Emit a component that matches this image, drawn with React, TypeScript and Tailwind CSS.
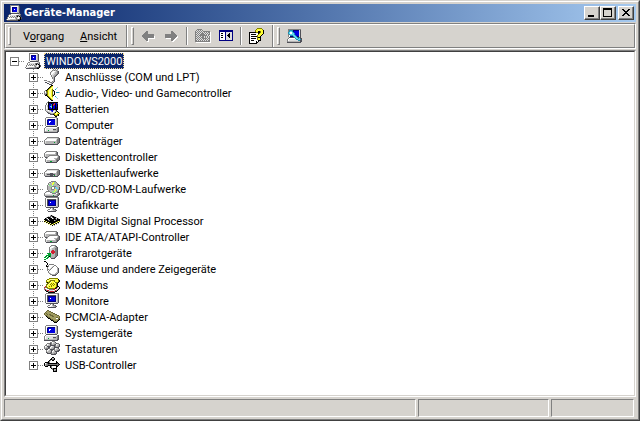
import clsx from "clsx";

const palette: Record<string, string> = {
  k: "#000000",
  d: "#808080",
  D: "#505058",
  g: "#b4b4b4",
  l: "#dedede",
  w: "#ffffff",
  b: "#0000e0",
  n: "#000080",
  v: "#8080c8",
  y: "#ffff30",
  Y: "#ffffa0",
  o: "#808000",
  O: "#a09c60",
  m: "#6c6838",
  r: "#d02030",
  G: "#00a030",
  e: "#90e090",
  c: "#60d8f0",
  t: "#2090b0",
};

const icons: Record<string, string[]> = {
  root: [
    "....ddddddddd...",
    "....dwwwwwwwgD..",
    "....dwnnnnnlgD..",
    "....dwnbbbblgD..",
    "....dwnbwbblgD..",
    "....dwnbbbblgD..",
    "....dwnbbbblgD..",
    "....dwlllllggD..",
    ".....DDDDDDDDd..",
    "...ddwwwwwwwlgd.",
    "..dwlllllldDDgD.",
    "..dwdldldldkgkD.",
    ".dwdldldldggwlkD",
    ".dwwwwwwwgdlwgkD",
    "dwllggggggddDDk.",
    ".DDDDDDDDDDDkk..",
  ],
  plug: [
    ".........d.d.d..",
    "........dgdgdg..",
    ".......dlwwlgdD.",
    "......dlwwlggdD.",
    "......dwwllggdD.",
    "......dwllggdD..",
    ".......dlggdD...",
    ".......dlgdD....",
    "........dgD.....",
    "........dgD.....",
    ".........gD.....",
    "ddd......gD.....",
    ".wwgdd..dgD.....",
    ".DDwwgddgD......",
    "...DDwwgD.......",
    ".....DDD........",
  ],
  sound: [
    ".......kk.......",
    "......koy.......",
    ".....koyY....g..",
    "....koyYy...c...",
    "...koyYyo..t....",
    ".dkoyYYyok......",
    "dwooyYYyogk.....",
    "dwdoyYYyowk.tttg",
    "dgdoyYYyowk.....",
    "ddkoyYYyogk.....",
    ".kkoyYYyok......",
    "...koyYyo..t....",
    "....koyYy...c...",
    ".....koyY....g..",
    "......koy.......",
    ".......kk.......",
  ],
  battery: [
    "....d...........",
    "...dkkkkkkkkkk..",
    "..dwknnknnrnbD..",
    "..dwknbtkrrkbk..",
    ".dwgkbbtkrbkbk..",
    ".dwgkbcckbbkbk..",
    ".dwlkbbckbbknk..",
    ".dwlknbbkbnknk..",
    ".dlgkkkkkkkkkk..",
    ".dllwgvbbdlgk...",
    "..dgllwvbwwgDk..",
    "...DdglllwgkYyk.",
    "....DDdggdoyYyyo",
    "......DDDkoyyok.",
    "..........koook.",
    "...........kk...",
  ],
  computer: [
    "..ddddddddddd...",
    ".dwwwwwwwwwwgD..",
    ".dwdnnnnnnnlgD..",
    ".dwnbbbbbbblgD..",
    ".dwnbwwbbbblgD..",
    ".dwnbwbbbbblgD..",
    ".dwnbbbbbbblgD..",
    ".dwnbbbbbbblgD..",
    ".dwllllllllggD..",
    "..DDDDDDDDDDD...",
    ".dwwwwwwwwwwwdD.",
    "dwllllllllllgdD.",
    "dwlllllllDDDgdD.",
    "dwllGllllggggdD.",
    "dggggggggggggDD.",
    "DDDDDDDDDDDDDD..",
  ],
  disk: [
    "................",
    "................",
    "................",
    "................",
    "...dddddddddddd.",
    "..dllllllllllgdD",
    ".dlwwwwwwwwwlddD",
    "dwwwwwwwwwwwgddD",
    "dlgggggggggggddD",
    "dlggggggggGggddD",
    "dggggggggggggdD.",
    ".DDDDDDDDDDDDD..",
    "................",
    "................",
    "................",
    "................",
  ],
  controller: [
    "................",
    "................",
    "..ddddddddddd...",
    ".dlwwwwwwwwldD..",
    "dwwwwwwwwwwgdD..",
    "dlggggggggggdD..",
    "dlgggdddddddddd.",
    "dgggdlwwwwwwwldD",
    ".DDdwwwwwwwwwgdD",
    "..dlwwwwwwgggddD",
    ".dwwwwwwwwwgdddD",
    ".dlgggggggggdDD.",
    ".dlgggGGggggdD..",
    "..DDDDDDDDDDD...",
    "................",
    "................",
  ],
  floppy: [
    "................",
    "................",
    "................",
    "................",
    "...dddddddddddd.",
    "..dllllllllllgdD",
    ".dlwwwwwwwwwlddD",
    "dwwwwwwwwwwwgddD",
    "dlggggDDDggggddD",
    "dlgDDDDDDDDggddD",
    "dgggggDDDgGggdD.",
    ".DDDDDDDDDDDDD..",
    "................",
    "................",
    "................",
    "................",
  ],
  cdrom: [
    ".......ddddd....",
    ".....ddlgyegd...",
    "....dlggyyeggd..",
    "....deggyegggdD.",
    "...dleeglegggggD",
    "...dggeeddddggggD",
    "...dgggdwwdccggD",
    "...dgggdwwdgccgD",
    "...dgggdddgyggdD",
    "....dgggggeyegD.",
    "..ddddggeeygedD.",
    ".dlwwwddeeegddd.",
    "dwwwwwwwddddwgdD",
    "dlllllllllllgddD",
    "dggggggggGgggdD.",
    ".DDDDDDDDDDDDD..",
  ],
  display: [
    "..ddddddddddddd.",
    ".dwwwwwwwwwwwgD.",
    ".dwDDDDDDDDDlgD.",
    ".dwDnnnnnnnnlgD.",
    ".dwDnbbbbbbnlgD.",
    ".dwDnbwbbbbnlgD.",
    ".dwDnbbbbbbnlgD.",
    ".dwDnbbbbbbnlgD.",
    ".dwDnnnnnnnnlgD.",
    ".dwlllllllllggD.",
    "..DDDDDDDDDDDD..",
    "......dwgD......",
    "....ddwwgddD....",
    "...dwwwllggdD...",
    "....DDDDDDDD....",
    "................",
  ],
  chip: [
    "................",
    "................",
    "......gkg.......",
    "....glDdkkg.....",
    "..gkkkDwdkkkg...",
    ".kdwkkkkwdkDlkg.",
    "kkkDwkkkkkkkdkkk",
    "YkkkDdkkkkgDkkkk",
    "koYkkkkkkkkkkoYo",
    "Y.koYkkkkkkoYok.",
    "..Y.koYkkoYok.g.",
    "....Y.koYok.g...",
    "......Y.k.g.....",
    "................",
    "................",
    "................",
  ],
  infrared: [
    ".......ddddd....",
    "......dlwwldD...",
    ".....dwwwlggdD..",
    ".....dwlgggddD..",
    ".....dllgggddD..",
    ".....dlgrrgddD..",
    ".....dlrrrrddD..",
    ".....dlrrrrddD..",
    "...GGGGgrrgddD..",
    "....GGGggggddD..",
    "..GGGGGggggddD..",
    ".GG.GkGggggdD...",
    "GG.GG.dgggdD....",
    "..GG...DDDD.....",
    "GG..............",
    "................",
  ],
  mouse: [
    "kk..............",
    "..k.............",
    "...k............",
    "...k.ddddd......",
    "..k.dwwwwwdd....",
    "..kkdwwwldwwd...",
    "...dwwwldwwwwd..",
    "...dwwldwwwwwgD.",
    "...ddldwwwwwwgD.",
    "...dwdwwwwwwwgD.",
    "....dwwwwwwwwgD.",
    "....dlwwwwwwggD.",
    ".....dgwwwwggD..",
    "......ddgggdD...",
    "........DDDD....",
    "................",
  ],
  modem: [
    "................",
    ".....ooooooooo..",
    "...ooyYYYYYyyyk.",
    "..oYYyoooooyyyok",
    "..oyyooYyyoyyyok",
    "..okooYyyyYoook.",
    "...ooYyoyoyyok..",
    "..ooYyoyoyoyok..",
    "..oYyyyoyoyyok..",
    ".roYyoyoyyyyokk.",
    "rdooyyyyyyyokdwk",
    "dwwdoooooookrwgk",
    "drlwwddddrrwlgk.",
    ".kdrrllllwlrdk..",
    "..kkddrrrrdkk...",
    "....kkkkkkk.....",
  ],
  card: [
    "................",
    "...mm...........",
    "..mOOmm.........",
    ".mOOOOOmm.......",
    "mOmOOOOOOmm.....",
    "mOOmOmmOOOOmm...",
    ".mmOOOmmmOOOOmm.",
    "..kmOOOOmmOOOOOm",
    "...kmmOOOOOOmmOm",
    "....kkmOOOOOwwmm",
    "......kmmOOOOOmk",
    ".......kkmOOOmk.",
    ".........kmmmk..",
    "..........kkk...",
    "................",
    "................",
  ],
  keyboard: [
    "........ddd.....",
    "......ddwlgD....",
    "...dddDdlgggDdd.",
    "..dwlgDdggdDwlgD",
    ".ddlggDDDDDdlggD",
    "dwlDDDdwlgDdggdD",
    "dlggDDwlggDDDDD.",
    "dgddDdlggdDwlgD.",
    ".DDDwlDDDDdlgggD",
    "..dwlggDdwdggdDD",
    "..dlgggDwlgDDDD.",
    "..DdggdDlgggD...",
    "...DDDDdggddD...",
    ".......DDDDD....",
    "................",
    "................",
  ],
  usb: [
    "........kk......",
    ".......kggk.....",
    "......kkdDk.....",
    ".....kd.kk......",
    "....kd......k...",
    ".kkkkd......kk..",
    "kwgDkkkkkkkkkDk.",
    "kgddDdddddddddDk",
    "kgdDkkkkkkkkkDk.",
    ".kkk..kd....kk..",
    "......kd....k...",
    ".......kdkkkk...",
    "........dkggk...",
    ".........kgdk...",
    ".........kkkk...",
    "................",
  ],
  back: [
    "................",
    "................",
    "................",
    "......dd........",
    ".....ddd........",
    "....dddd........",
    "...ddddddddddd..",
    "..dddddddddddd..",
    "..ddddddddddddw.",
    "...dddddddddddw.",
    "....ddddwwwwwww.",
    ".....dddw.......",
    "......ddw.......",
    ".......ww.......",
    "................",
    "................",
  ],
  forward: [
    "................",
    "................",
    "................",
    "........dd......",
    "........ddd.....",
    "........dddd....",
    "..ddddddddddd...",
    "..dddddddddddd..",
    "..ddddddddddddw.",
    "..dddddddddddww.",
    "...wwwwwddddww..",
    "........dddww...",
    "........ddww....",
    ".........ww.....",
    "................",
    "................",
  ],
  folder: [
    "................",
    "..ddddd.........",
    ".dldldld........",
    "dldldldlddddddd.",
    "ddldldldldldlddw",
    "dldldldddldldldw",
    "ddldldddddldlddw",
    "dldlddddddddldlw",
    "ddldldlddldldldw",
    "dldldldddldldldw",
    "ddldldldddddlddw",
    "dldldldldldldldw",
    "ddldldldldldlddw",
    "dddddddddddddddw",
    ".wwwwwwwwwwwwwww",
    "................",
  ],
  pane: [
    "................",
    "................",
    ".nnnnnnnnnnnnnn.",
    ".nnnnnnnnnnnnnn.",
    ".nwwwwwnlllllln.",
    ".nwkkwwnlllklln.",
    ".nwwwwwnllkklln.",
    ".nwkkwwnlkkklln.",
    ".nwwwwwnllkklln.",
    ".nwkkwwnlllklln.",
    ".nwwwwwnlllllln.",
    ".nwwwwwnlllllln.",
    ".nnnnnnnnnnnnnn.",
    "................",
    "................",
    "................",
  ],
  help: [
    "........ooooo...",
    ".......oyyyyyo..",
    "......oyyYyyyyk.",
    "......oyykkoyyk.",
    "kkkkkkkookkoyyk.",
    "kwwwwwwwwkoyyyk.",
    "kwkkkkkwwoyyyk..",
    "kwwwwwwwoyyyk...",
    "kwkkkkkkoyyk....",
    "kwwwwwwwokkk....",
    "kwkkkkkwoyyk....",
    "kwwwwwwwoyyk....",
    "kwkkkwwwwkkk....",
    "kwwwwwwkwk......",
    "kwwwwwwkk.......",
    "kkkkkkkk........",
  ],
  scan: [
    "................",
    ".ddddddddddddd..",
    ".dttttnnnnnnlD..",
    ".dtcctnbbbbblD..",
    ".tcwwctbbbbblD..",
    ".tcwwcctbbbblD..",
    ".dtcccctbbbblD..",
    ".dwtttcctbbblD..",
    ".dwnnntcctnnlD..",
    "..DDDDDtcctDtD..",
    ".dwwwwwwtcctcDD.",
    "dwlllllllttcctD.",
    "dwlllllllllttDD.",
    "dggggggggggggDD.",
    "DDDDDDDDDDDDDD..",
    "................",
  ],
};

function Icon({ name }: { name: string }) {
  return (
    <svg
      width="16"
      height="16"
      viewBox="0 0 16 16"
      shapeRendering="crispEdges"
      className="relative shrink-0"
      aria-hidden="true"
    >
      {icons[name].map((row, y) =>
        row
          .split("")
          .map((c, x) =>
            palette[c] ? (
              <rect key={`${x}-${y}`} x={x} y={y} width="1" height="1" fill={palette[c]} />
            ) : null
          )
      )}
    </svg>
  );
}

const devices = [
  { label: "Anschlüsse (COM und LPT)", icon: "plug" },
  { label: "Audio-, Video- und Gamecontroller", icon: "sound" },
  { label: "Batterien", icon: "battery" },
  { label: "Computer", icon: "computer" },
  { label: "Datenträger", icon: "disk" },
  { label: "Diskettencontroller", icon: "controller" },
  { label: "Diskettenlaufwerke", icon: "floppy" },
  { label: "DVD/CD-ROM-Laufwerke", icon: "cdrom" },
  { label: "Grafikkarte", icon: "display" },
  { label: "IBM Digital Signal Processor", icon: "chip" },
  { label: "IDE ATA/ATAPI-Controller", icon: "controller" },
  { label: "Infrarotgeräte", icon: "infrared" },
  { label: "Mäuse und andere Zeigegeräte", icon: "mouse" },
  { label: "Modems", icon: "modem" },
  { label: "Monitore", icon: "display" },
  { label: "PCMCIA-Adapter", icon: "card" },
  { label: "Systemgeräte", icon: "computer" },
  { label: "Tastaturen", icon: "keyboard" },
  { label: "USB-Controller", icon: "usb" },
];

function Expander({ open, label }: { open?: boolean; label: string }) {
  return (
    <button
      type="button"
      aria-label={label}
      aria-expanded={!!open}
      className="relative h-[9px] w-[9px] shrink-0 bg-white"
    >
      <svg width="9" height="9" viewBox="0 0 9 9" shapeRendering="crispEdges">
        <path d="M0 0H9V9H0ZM1 1V8H8V1Z" fill="#808080" fillRule="evenodd" />
        <path d="M2 4H7V5H2Z" fill="#000" />
        {!open && <path d="M4 2H5V7H4Z" fill="#000" />}
      </svg>
    </button>
  );
}

function Dots() {
  return (
    <span className="h-px w-[6px] shrink-0 bg-[repeating-linear-gradient(90deg,#808080_0_1px,transparent_1px_2px)]" />
  );
}

function Grip() {
  return (
    <span className="h-[18px] w-[3px] shrink-0 border border-t-white border-l-white border-r-[#808080] border-b-[#808080]" />
  );
}

function Separator() {
  return <span className="h-[18px] w-[2px] shrink-0 border-l border-l-[#808080] border-r border-r-white" />;
}

function BandEdge() {
  return <span className="w-[2px] shrink-0 self-stretch border-l border-l-[#808080] border-r border-r-white" />;
}

function ToolButton({ icon, label, disabled }: { icon: string; label: string; disabled?: boolean }) {
  return (
    <button
      type="button"
      aria-label={label}
      disabled={disabled}
      className="flex h-[22px] w-[23px] shrink-0 items-center justify-center"
    >
      <Icon name={icon} />
    </button>
  );
}

function CaptionButton({ label, path }: { label: string; path: string }) {
  return (
    <button
      type="button"
      aria-label={label}
      className="h-[14px] w-4 border border-t-white border-l-white border-r-[#404040] border-b-[#404040] bg-[#d6d3ce] shadow-[inset_-1px_-1px_0_#808080]"
    >
      <svg width="14" height="12" viewBox="0 0 14 12" shapeRendering="crispEdges">
        <path d={path} fill="#000" fillRule="evenodd" />
      </svg>
    </button>
  );
}

function StatusPanel({ className }: { className: string }) {
  return (
    <div
      className={clsx(
        "h-[18px] border border-t-[#808080] border-l-[#808080] border-r-white border-b-white",
        className
      )}
    />
  );
}

export default function App() {
  return (
    <div className="flex min-h-screen w-full flex-col border border-t-[#d6d3ce] border-l-[#d6d3ce] border-r-[#404040] border-b-[#404040] bg-[#d6d3ce] font-['Roboto','Liberation_Sans',sans-serif] text-[11px] leading-[14px] text-black">
      <div className="flex flex-1 flex-col border border-t-white border-l-white border-r-[#808080] border-b-[#808080] p-[2px]">
        <header className="flex h-[18px] items-center bg-linear-to-r from-[#0a246a] to-[#a6caf0] px-[2px]">
          <Icon name="root" />
          <h1 className="ml-[2px] flex-1 font-['DejaVu_Sans_Condensed','DejaVu_Sans',sans-serif] text-[11px] font-bold text-white">
            Geräte-Manager
          </h1>
          <div className="flex">
            <CaptionButton label="Minimieren" path="M3 8H9V10H3Z" />
            <CaptionButton label="Maximieren" path="M2 1H11V10H2ZM3 3V9H10V3Z" />
          </div>
          <div className="ml-[2px] flex">
            <CaptionButton
              label="Schließen"
              path="M3 2H5V3H6V4H8V3H9V2H11V3H10V4H9V5H8V6H9V7H10V8H11V9H9V8H8V7H6V8H5V9H3V8H4V7H5V6H6V5H5V4H4V3H3Z"
            />
          </div>
        </header>

        <div className="mt-px border border-t-[#808080] border-l-[#808080] border-r-white border-b-white">
          <div className="flex h-6 items-center border border-t-white border-l-white border-r-[#808080] border-b-[#808080] pl-[2px]">
            <Grip />
            <nav className="flex w-[115px] pt-[2px] pl-3">
              <button type="button" className="mr-4">
                V<u>o</u>rgang
              </button>
              <button type="button">
                <u>A</u>nsicht
              </button>
            </nav>
            <BandEdge />
            <span className="w-[3px]" />
            <Grip />
            <div className="flex w-[138px] items-center pl-[2px]">
              <ToolButton icon="back" label="Zurück" disabled />
              <ToolButton icon="forward" label="Vorwärts" disabled />
              <span className="w-1" />
              <Separator />
              <span className="w-[3px]" />
              <ToolButton icon="folder" label="Eine Ebene nach oben" disabled />
              <ToolButton icon="pane" label="Konsolenstruktur einblenden" />
              <span className="w-[3px]" />
              <Separator />
              <span className="w-[3px]" />
              <ToolButton icon="help" label="Hilfe" />
            </div>
            <BandEdge />
            <span className="w-[3px]" />
            <Grip />
            <span className="w-[3px]" />
            <ToolButton icon="scan" label="Nach geänderter Hardware suchen" />
          </div>
        </div>

        <main className="mt-px flex flex-1 border border-t-[#808080] border-l-[#808080] border-r-white border-b-white">
          <div className="flex-1 border border-t-[#404040] border-l-[#404040] border-r-[#d6d3ce] border-b-[#d6d3ce] bg-white pt-px pl-1">
            <div className="flex h-4 items-center">
              <Expander open label="WINDOWS2000 reduzieren" />
              <Dots />
              <Icon name="root" />
              <span className="ml-[3px] bg-[#0a246a] px-[2px] pt-[2px] text-white outline-1 -outline-offset-1 outline-dotted outline-[#f5db95]">
                WINDOWS2000
              </span>
            </div>
            <ul>
              {devices.map((device, i) => (
                <li key={device.label} className="relative flex h-4 items-center pl-[19px]">
                  <span
                    className={clsx(
                      "absolute top-0 left-[23px] w-px bg-[repeating-linear-gradient(#808080_0_1px,transparent_1px_2px)]",
                      i === devices.length - 1 ? "h-2" : "h-4"
                    )}
                  />
                  <Expander label={`${device.label} erweitern`} />
                  <Dots />
                  <Icon name={device.icon} />
                  <span className="ml-[3px] px-[2px] pt-[2px] whitespace-nowrap">{device.label}</span>
                </li>
              ))}
            </ul>
          </div>
        </main>

        <footer className="mt-[2px] flex gap-[2px] pr-[2px]">
          <StatusPanel className="flex-1" />
          <StatusPanel className="w-[131px]" />
          <StatusPanel className="w-[83px]" />
        </footer>
      </div>
    </div>
  );
}
